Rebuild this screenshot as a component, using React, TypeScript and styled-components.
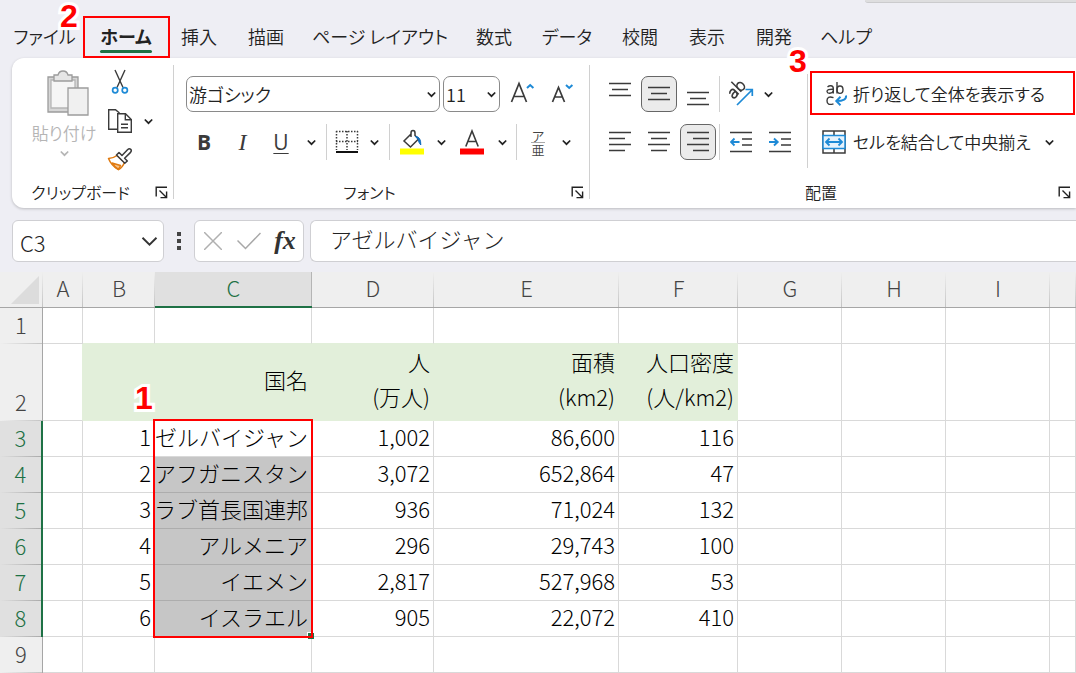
import React from "react";
import styled, { createGlobalStyle, css } from "styled-components";

const GREEN = "#1e7145";
const RED = "#ff0000";
const INK = "#3b3b3b";
const BLUE = "#1e8ad6";
const LINE = "#d9d9d9";

const GlobalStyle = createGlobalStyle`
  *, *::before, *::after { box-sizing: border-box; }
  body {
    margin: 0;
    background: #eeeef4;
    color: #222;
    font-family: "Noto Sans CJK JP", sans-serif;
    font-weight: 350;
    font-size: 18px;
    overflow-x: hidden;
  }
  button, input, select { font: inherit; color: inherit; }
  button { border: 0; background: none; padding: 0; cursor: pointer; }
  svg { display: block; }
`;

/* ---------- shared pieces ---------- */

const StepNumber = styled.span<{ $top: number; $left: number }>`
  position: absolute;
  z-index: 3;
  top: ${(p) => p.$top}px;
  left: ${(p) => p.$left}px;
  color: ${RED};
  font: bold 32px/32px "Liberation Sans", sans-serif;
  -webkit-text-stroke: 6px #fff;
  paint-order: stroke fill;
  pointer-events: none;
`;

const Highlight = styled.span<{ $inset: string }>`
  position: absolute;
  z-index: 2;
  inset: ${(p) => p.$inset};
  border: 2px solid ${RED};
  pointer-events: none;
`;

const Chevron = ({ color = "#222", size = 9 }: { color?: string; size?: number }) => (
  <svg width={size} height={size} viewBox="0 0 9 9" fill="none" stroke={color} strokeWidth={size > 10 ? 1 : 1.7}>
    <path d="M0.8 2.5 4.5 6.2 8.2 2.5" />
  </svg>
);

/* ---------- tabs ---------- */

const Header = styled.header`
  height: 58px;
  display: flex;
  flex-direction: column;
  justify-content: space-between;
`;

const SearchEdge = styled.div`
  align-self: flex-end;
  width: 211px;
  height: 3px;
  background: #dededf;
  border-bottom: 1px solid #cbcbcd;
  border-bottom-left-radius: 3px;
`;

const TabBar = styled.nav`
  display: grid;
  grid-template-columns: 57px 52px 40px 40px 134px 40px 52px 40px 40px 40px 50px;
  column-gap: 27px;
  height: 42px;
  padding-left: 16px;
  align-items: center;
`;

const Tab = styled.button<{ $active?: boolean }>`
  position: relative;
  height: 42px;
  padding-bottom: 3px;
  display: flex;
  justify-content: center;
  align-items: center;
  white-space: nowrap;
  font-size: 18px;
  font-feature-settings: "palt";
  ${(p) =>
    p.$active &&
    css`
      font-weight: 700;
      &::before {
        content: "";
        position: absolute;
        bottom: 5px;
        left: 0;
        right: 0;
        height: 3px;
        border-radius: 2px;
        background: ${GREEN};
      }
    `}
`;

/* ---------- ribbon ---------- */

const Ribbon = styled.section`
  display: flex;
  height: 150px;
  margin-left: 12px;
  background: #fff;
  border-radius: 12px 0 0 12px;
  box-shadow: 0 1px 3px rgba(0, 0, 0, 0.22);
`;

const Group = styled.div<{ $width?: number }>`
  position: relative;
  display: flex;
  flex-direction: column;
  justify-content: space-between;
  ${(p) => (p.$width ? `flex: 0 0 ${p.$width}px;` : "flex: 1 1 0; min-width: 486px;")}
`;

const GroupDivider = styled.div`
  flex: 0 0 1px;
  margin: 7px 0 9px;
  background: #d0d0d0;
`;

const GroupFooter = styled.div`
  height: 31px;
  display: flex;
  align-items: center;
  font-size: 16px;
  font-feature-settings: "palt";
`;

const GroupName = styled.span`
  flex: 1;
  padding-bottom: 2px;
  text-align: center;
`;

const Launcher = styled.button`
  width: 24px;
  height: 24px;
  display: grid;
  place-items: center;
`;

const Footer = ({ name }: { name: string }) => (
  <GroupFooter>
    <GroupName>{name}</GroupName>
    <Launcher aria-label={name + "の設定"}>
      <svg width="13" height="13" viewBox="0 0 13 13" fill="none" stroke="#222" strokeWidth="1.4">
        <path d="M1.2 10.5V1.2H12" />
        <path d="M4.5 4.5 11 11M11.6 5.5V11.6H5.5" />
      </svg>
    </Launcher>
  </GroupFooter>
);

const ClipboardBody = styled.div`
  display: grid;
  grid-template-columns: 80px 32px 24px;
  padding: 10px 0 0 12px;
`;

const PasteButton = styled.button`
  display: flex;
  flex-direction: column;
  align-items: center;
  color: #b5b5b5;
  font-size: 17px;
  line-height: 32px;
  font-feature-settings: "palt";
  white-space: nowrap;
  & > svg:first-child { margin: 2px 0 1px 8px; }
`;

const ToolColumn = styled.div`
  display: grid;
  grid-template-rows: 28px 50px 26px;
  align-content: start;
  place-items: center;
`;

const Stack = styled.div`
  padding-top: 18px;
  display: flex;
  flex-direction: column;
  gap: 12px;
`;

const FontStack = styled(Stack)`
  padding-left: 11px;
`;

const ToolRow = styled.div<{ $gap?: number }>`
  height: 36px;
  display: flex;
  align-items: center;
  gap: ${(p) => p.$gap ?? 0}px;
`;

const ToolButton = styled.button<{ $width?: number; $on?: boolean }>`
  width: ${(p) => p.$width ?? 36}px;
  height: 36px;
  display: grid;
  place-items: center;
  border: 1px solid ${(p) => (p.$on ? "#666" : "transparent")};
  border-radius: 7px;
  background: ${(p) => (p.$on ? "#ebebeb" : "transparent")};
`;

const LetterButton = styled(ToolButton)<{ $kind: "bold" | "italic" | "underline" }>`
  color: ${INK};
  font: 400 21px/24px "Open Sans", "Noto Sans", sans-serif;
  ${(p) => p.$kind === "bold" && "font-weight: 700;"}
  ${(p) => p.$kind === "italic" && `font-family: "Liberation Serif", serif; font-style: italic; font-size: 24px;`}
  ${(p) => p.$kind === "underline" && "text-decoration: underline; text-decoration-thickness: 1px; text-underline-offset: 3px;"}
`;

const RowDivider = styled.span<{ $margin?: number }>`
  flex: 0 0 1px;
  height: 36px;
  margin: 0 ${(p) => p.$margin ?? 0}px;
  background: #d0d0d0;
`;

const SelectBox = styled.label<{ $width: number }>`
  position: relative;
  width: ${(p) => p.$width}px;
  height: 36px;
  margin: 0 2px 0 1px;
  display: flex;
  align-items: center;
  svg { position: absolute; right: 4px; pointer-events: none; }
`;

const Select = styled.select`
  appearance: none;
  width: 100%;
  height: 36px;
  padding: 0 16px 0 2px;
  border: 1px solid #8a8a8a;
  border-radius: 7px;
  background: #fff;
  font-size: 18px;
  color: #222;
  font-feature-settings: "palt";
`;

const AlignBody = styled.div`
  display: flex;
`;

const AlignStack = styled(Stack)`
  flex: 0 0 217px;
  padding-left: 12px;
`;

const BlockDivider = styled.span`
  flex: 0 0 1px;
  height: 94px;
  margin-top: 16px;
  background: #d0d0d0;
`;

const TextStack = styled(Stack)`
  flex: 1;
  min-width: 0;
`;

const TextButton = styled.button`
  position: relative;
  height: 36px;
  padding: 0 19px 0 14px;
  display: grid;
  grid-template-columns: 26px minmax(0, 1fr) 12px;
  column-gap: 5px;
  align-items: center;
  text-align: left;
  white-space: nowrap;
  font-size: 17px;
  font-feature-settings: "palt";
`;

const ButtonText = styled.span`
  padding-bottom: 2px;
`;

const Lines = ({ rows }: { rows: [number, number, number][] }) => (
  <svg width="22" height="24" viewBox="0 0 22 24" stroke={INK} strokeWidth="1.5">
    {rows.map(([y, a, b]) => (
      <path key={y} d={`M${a} ${y}H${b}`} />
    ))}
  </svg>
);

const PasteIcon = () => (
  <svg width="42" height="46" viewBox="0 0 42 46" fill="#f0f0f0" stroke="#9c9c9c" strokeWidth="1.3">
    <path d="M1 7H31V42H1Z" fill="#d6d6d6" />
    <path d="M4 10H28V38H4Z" fill="#f5f5f5" stroke="#b5b5b5" />
    <path d="M7 11V5H11Q12 1 16 1T21 5H25V11Z" fill="#e6e6e6" />
    <path d="M21 18H41V45H21Z" />
  </svg>
);

const CutIcon = () => (
  <svg width="18" height="26" viewBox="0 0 18 26" fill="none" strokeWidth="1.4">
    <path d="M4 1 12 18.500M14 1 6 18.500" stroke={INK} />
    <circle cx="4.200" cy="21.300" r="2.600" stroke={BLUE} strokeWidth="1.700" />
    <circle cx="13.800" cy="21.300" r="2.600" stroke={BLUE} strokeWidth="1.700" />
  </svg>
);

const CopyIcon = () => (
  <svg width="26" height="26" viewBox="0 0 26 26" fill="#fff" stroke={INK} strokeWidth="1.4">
    <path d="M10 21.300H1.700V1.700H8.500L12.500 5" />
    <path d="M10.700 5.700H18.500L24.300 11.500V24.300H10.700Z" />
    <path d="M18.300 5.700V11.700H24.300M14 16.300H21M14 19.800H21" fill="none" />
  </svg>
);

const BrushIcon = () => (
  <svg width="26" height="24" viewBox="0 0 26 24" fill="none" strokeWidth="1.500" strokeLinejoin="round">
    <path d="M10 8.500Q6 11.500 1.500 11.500 4.500 19 11.500 22.500 15.500 20.500 17.500 15.500Z" stroke="#e07a10" fill="#fff" />
    <path d="M5 16 13.500 18.500 11.500 22.500Q8 20.500 5 16Z" fill="#f8c48a" stroke="#e07a10" />
    <path d="M9.500 8 12 5.500 15 8.500 20.500 2.800Q22.300 1 23.700 2.400T23.300 5.600L17.600 11.200 20.300 14 17.800 16.300Z" stroke={INK} fill="#fff" />
  </svg>
);

const BorderIcon = () => (
  <svg width="24" height="24" viewBox="0 0 24 24" fill="none" stroke={INK} strokeWidth="1.500">
    <path d="M1 1.500H23M1 11.500H23M1.500 1V20M12 1V20M22.500 1V20" strokeDasharray="1.500 1.500" />
    <path d="M1 22H23" stroke="#111" strokeWidth="2" />
  </svg>
);

const FillIcon = () => (
  <svg width="24" height="26" viewBox="0 0 24 26" fill="none">
    <path d="M11.500 4.500 4 12 10.500 18 18.500 10 15 6.500V4Q15 1.500 13 1.500T11 4V8" stroke={INK} strokeWidth="1.500" />
    <path d="M15.500 7.500Q21 7.500 20.800 16 18.500 13.500 18.200 10.500Z" fill="#0f6cbd" stroke="#0f6cbd" />
    <path d="M0 19.500H24V25.500H0Z" fill="#ffff00" />
  </svg>
);

const FontColorIcon = () => (
  <svg width="24" height="26" viewBox="0 0 24 26" fill="none">
    <path d="M5.800 17.500 12 2 18.200 17.500M8 12.500H16" stroke={INK} strokeWidth="1.600" />
    <path d="M0 19.500H24V25.500H0Z" fill={RED} />
  </svg>
);

const ResizeFontIcon = ({ grow }: { grow?: boolean }) => (
  <svg width="26" height="26" viewBox="0 0 26 26" fill="none" strokeWidth="1.700">
    <path d={grow ? "M2.500 21 10 2.500 17.500 21M5 15.500H15" : "M3.500 21 9.500 6.500 15.500 21M5.500 16H13.500"} stroke={INK} />
    <path d={grow ? "M18 7 21.200 4 24.400 7" : "M17 4 20.200 7 23.400 4"} stroke={BLUE} strokeWidth="2" />
  </svg>
);

const Phonetic = styled.span`
  display: flex;
  flex-direction: column;
  color: #444;
  font-size: 13px;
  line-height: 13px;
  span + span { border-top: 1px solid #aaa; }
`;

const OrientationIcon = () => (
  <svg width="26" height="26" viewBox="0 0 26 26" fill="none" strokeWidth="1.400">
    <g stroke={INK} transform="rotate(-45 9 9) translate(-1 -2) scale(1.150)">
      <path d="M2 7.500Q3 6 4.700 6 7 6 7 8.300V13.300M7 9.300Q1.500 9 1.500 11.300 1.800 13.500 4.300 13.200 6.500 12.800 7 10.700" />
      <path d="M10.300 1V13.300" />
      <ellipse cx="13.200" cy="9.600" rx="2.900" ry="3.600" />
    </g>
    <path d="M9 24 24 9M17.500 8.500H24.300V15" stroke={BLUE} strokeWidth="1.700" />
  </svg>
);

const IndentIcon = ({ right }: { right?: boolean }) => (
  <svg width="22" height="22" viewBox="0 0 22 22" fill="none" strokeWidth="1.500">
    <path d="M0 1.500H22M12 8H22M12 14H22M0 20.500H22" stroke={INK} />
    <path
      d={right ? "M0 11H8.500M5 7.500 8.700 11 5 14.500" : "M1 11H9.500M4.500 7.500 1 11 4.500 14.500"}
      stroke={BLUE}
      strokeWidth="1.900"
    />
  </svg>
);

const WrapIcon = () => (
  <svg width="26" height="28" viewBox="0 0 26 28" fill="none" strokeWidth="1.400">
    <g stroke={INK}>
      <path d="M5.500 7Q7 5.700 8.800 5.800 11.300 6 11.300 8.500V13.500M11.300 9.300Q5 9 5 11.500 5.200 13.500 7.800 13.300 11 13 11.300 10.500" />
      <path d="M15 2V13.500" />
      <ellipse cx="18" cy="9.700" rx="3" ry="3.700" />
      <path d="M11.500 17.700Q5 15.500 5 20.700T11.500 23.800" />
    </g>
    <path d="M24 15.500Q25 21 14.500 21M18.500 16.800 14.300 21 18.500 25.200" stroke={BLUE} strokeWidth="2" />
  </svg>
);

const MergeIcon = () => (
  <svg width="24" height="24" viewBox="0 0 24 24" fill="none" strokeWidth="1.500">
    <path d="M1 1H23V23H1ZM12 1V6M12 18V23" stroke={INK} />
    <path d="M1 5.500H23V18.500H1Z" fill="#e6f2fc" stroke={BLUE} />
    <path d="M4 12H20M7.500 8.500 4 12 7.500 15.500M16.500 8.500 20 12 16.500 15.500" stroke={BLUE} strokeWidth="1.800" />
  </svg>
);

const Drop = ({ label, width = 22 }: { label: string; width?: number }) => (
  <ToolButton $width={width} aria-label={label}>
    <Chevron />
  </ToolButton>
);

/* ---------- formula bar ---------- */

const FormulaBar = styled.div`
  display: flex;
  align-items: center;
  padding: 12px 0 10px 12px;
`;

const NameBox = styled.label`
  position: relative;
  flex: 0 0 152px;
  height: 42px;
  display: flex;
  align-items: center;
  svg { position: absolute; right: 6px; }
`;

const BarInput = styled.input<{ $open?: boolean }>`
  flex: 1;
  width: 100%;
  min-width: 0;
  height: 42px;
  padding: ${(p) => (p.$open ? "0 0 6px 19px" : "2px 0 0 7px")};
  border: 1px solid #cfcfd3;
  border-right-width: ${(p) => (p.$open ? 0 : 1)}px;
  border-radius: ${(p) => (p.$open ? "6px 0 0 6px" : "6px")};
  background: #fff;
  color: #222;
  font-weight: 300;
  font-size: 22px;
`;

const Dots = styled.span`
  flex: 0 0 30px;
  display: grid;
  justify-content: center;
  gap: 3px;
  i { width: 4px; height: 4px; background: #444; }
`;

const FormulaTools = styled.div`
  flex: 0 0 110px;
  height: 42px;
  margin-right: 6px;
  display: grid;
  grid-template-columns: 36px 36px 36px;
  align-items: center;
  justify-items: center;
  border: 1px solid #cfcfd3;
  border-radius: 6px;
  background: #fff;
`;

const FxButton = styled.button`
  color: #333;
  font: italic 700 26px/30px "Liberation Serif", serif;
`;

/* ---------- sheet ---------- */

const Sheet = styled.table`
  width: 100%;
  table-layout: fixed;
  border-collapse: separate;
  border-spacing: 0;
  background: #fff;
  font-size: 22px;
  font-weight: 300;
  line-height: 31px;
`;

const ColumnHead = styled.th<{ $on?: boolean }>`
  height: 36px;
  padding: 0 0 4px;
  font-weight: 300;
  line-height: 29px;
  color: ${(p) => (p.$on ? GREEN : "#444")};
  background: ${(p) =>
    p.$on
      ? "linear-gradient(#b5b5b5, #b5b5b5) right / 1px 100% no-repeat #e0e0e0"
      : "linear-gradient(#efefef, #c4c4c4) right / 1px 100% no-repeat #efefef"};
  border-bottom: ${(p) => (p.$on ? `2px solid ${GREEN}` : "1px solid #a6a6a6")};
`;

const Corner = styled(ColumnHead)`
  padding-bottom: 0;
  svg { margin: 0 0 0 11px; }
`;

const RowHead = styled.th<{ $on?: boolean }>`
  padding: 0 0 4px;
  font-weight: 300;
  vertical-align: bottom;
  color: ${(p) => (p.$on ? GREEN : "#444")};
  background: ${(p) =>
    p.$on
      ? "linear-gradient(to right, #e0e0e0, #ababab) bottom / 100% 1px no-repeat #e0e0e0"
      : "linear-gradient(to right, #efefef, #c4c4c4) bottom / 100% 1px no-repeat #efefef"};
  border-right: ${(p) => (p.$on ? `2px solid ${GREEN}` : "1px solid #a6a6a6")};
`;

const Cell = styled.td<{ $fill?: string; $right?: string; $bottom?: string; $tall?: boolean }>`
  position: relative;
  padding: 0 3px ${(p) => (p.$tall ? 6 : 4)}px 0;
  text-align: right;
  white-space: pre-line;
  color: #000;
  line-height: ${(p) => (p.$tall ? 35 : 31)}px;
  background: ${(p) => p.$fill ?? "#fff"};
  border-right: 1px solid ${(p) => p.$right ?? LINE};
  border-bottom: 1px solid ${(p) => p.$bottom ?? LINE};
`;

const Clip = styled.div`
  display: flex;
  justify-content: flex-end;
  overflow: hidden;
  white-space: nowrap;
`;

const FillHandle = styled.span`
  position: absolute;
  z-index: 1;
  right: -3px;
  bottom: -3px;
  width: 7px;
  height: 7px;
  background: ${GREEN};
  border: solid #fff;
  border-width: 1px 0 0 1px;
`;

const TABS = ["ファイル", "ホーム", "挿入", "描画", "ページ レイアウト", "数式", "データ", "校閲", "表示", "開発", "ヘルプ"];
const COLUMNS = ["A", "B", "C", "D", "E", "F", "G", "H", "I", ""];
const WIDTHS = [40, 72, 157, 122, 185, 119, 104, 104, 104];
const ROWS: string[][] = [
  [],
  ["", "", "国名", "人\n(万人)", "面積\n(km2)", "人口密度\n(人/km2)"],
  ["", "1", "アゼルバイジャン", "1,002", "86,600", "116"],
  ["", "2", "アフガニスタン", "3,072", "652,864", "47"],
  ["", "3", "アラブ首長国連邦", "936", "71,024", "132"],
  ["", "4", "アルメニア", "296", "29,743", "100"],
  ["", "5", "イエメン", "2,817", "527,968", "53"],
  ["", "6", "イスラエル", "905", "22,072", "410"],
  [],
];
const HEAD_FILL = "#e2efda";

const Col = styled.col<{ $width?: number }>`
  ${(p) => p.$width && `width: ${p.$width}px;`}
`;

const BodyRow = styled.tr<{ $tall?: boolean }>`
  height: ${(p) => (p.$tall ? 77 : 36)}px;
`;

function SheetCell({ r, c, text }: { r: number; c: number; text: string }) {
  const inHead = r === 1 && c >= 1 && c <= 5;
  const picked = c === 2 && r >= 3 && r <= 7;
  const aboveHead = r === 0 && c >= 1 && c <= 5;
  return (
    <Cell
      $tall={r === 1}
      $fill={inHead ? HEAD_FILL : picked ? "#c6c6c6" : undefined}
      $right={inHead || (r === 1 && c === 0) ? HEAD_FILL : undefined}
      $bottom={inHead || aboveHead ? HEAD_FILL : picked ? "#adadad" : undefined}
    >
      {c === 2 && r >= 2 && text ? <Clip>{text}</Clip> : text}
      {r === 1 && c === 1 && <StepNumber $top={38} $left={52}>1</StepNumber>}
      {r === 2 && c === 2 && <Highlight $inset="-2px -2px -182px -2px" />}
      {r === 7 && c === 2 && <FillHandle />}
    </Cell>
  );
}

export default function App() {
  return (
    <>
      <GlobalStyle />
      <Header>
        <SearchEdge />
        <TabBar>
          {TABS.map((t, i) => (
            <Tab key={t} $active={i === 1}>
              {t}
              {i === 1 && (
                <>
                  <Highlight $inset="0 -18px 0 -17px" />
                  <StepNumber $top={-16} $left={-40}>2</StepNumber>
                </>
              )}
            </Tab>
          ))}
        </TabBar>
      </Header>

      <Ribbon>
        <Group $width={161}>
          <ClipboardBody>
            <PasteButton>
              <PasteIcon />
              貼り付け
              <Chevron color="#b5b5b5" />
            </PasteButton>
            <ToolColumn>
              <button aria-label="切り取り"><CutIcon /></button>
              <button aria-label="コピー"><CopyIcon /></button>
              <button aria-label="書式のコピー"><BrushIcon /></button>
            </ToolColumn>
            <ToolColumn>
              <span />
              <button aria-label="コピーのオプション"><Chevron /></button>
            </ToolColumn>
          </ClipboardBody>
          <Footer name="クリップボード" />
        </Group>
        <GroupDivider />

        <Group $width={415}>
          <FontStack>
            <ToolRow>
              <SelectBox $width={254}>
                <Select aria-label="フォント名"><option>游ゴシック</option></Select>
                <Chevron />
              </SelectBox>
              <SelectBox $width={57}>
                <Select aria-label="サイズ"><option>11</option></Select>
                <Chevron />
              </SelectBox>
              <ToolButton $width={40} aria-label="拡大"><ResizeFontIcon grow /></ToolButton>
              <ToolButton $width={40} aria-label="縮小"><ResizeFontIcon /></ToolButton>
            </ToolRow>
            <ToolRow>
              <LetterButton $kind="bold" $width={38}>B</LetterButton>
              <LetterButton $kind="italic" $width={39}>I</LetterButton>
              <LetterButton $kind="underline" $width={38}>U</LetterButton>
              <Drop label="下線" />
              <RowDivider $margin={4} />
              <ToolButton $width={32} aria-label="罫線"><BorderIcon /></ToolButton>
              <Drop label="罫線の種類" />
              <RowDivider $margin={4} />
              <ToolButton aria-label="塗りつぶし"><FillIcon /></ToolButton>
              <Drop label="塗りつぶしの色" />
              <ToolButton $width={40} aria-label="文字色"><FontColorIcon /></ToolButton>
              <Drop label="文字の色" width={20} />
              <RowDivider $margin={4} />
              <ToolButton $width={34}>
                <Phonetic><span>ア</span><span>亜</span></Phonetic>
              </ToolButton>
              <Drop label="ふりがな" />
            </ToolRow>
          </FontStack>
          <Footer name="フォント" />
        </Group>
        <GroupDivider />

        <Group>
          <StepNumber $top={-13} $left={199}>3</StepNumber>
          <AlignBody>
            <AlignStack>
              <ToolRow $gap={3}>
                <ToolButton aria-label="上揃え"><Lines rows={[[1.5, 0, 22], [7.5, 3, 19], [13.5, 0, 22]]} /></ToolButton>
                <ToolButton $on aria-label="上下中央揃え"><Lines rows={[[5.5, 0, 22], [11.5, 3, 19], [17.5, 0, 22]]} /></ToolButton>
                <ToolButton aria-label="下揃え"><Lines rows={[[10.5, 0, 22], [16.5, 3, 19], [22.5, 0, 22]]} /></ToolButton>
                <RowDivider />
                <ToolButton aria-label="方向"><OrientationIcon /></ToolButton>
                <Drop label="方向の種類" width={12} />
              </ToolRow>
              <ToolRow $gap={3}>
                <ToolButton aria-label="左揃え"><Lines rows={[[2.5, 0, 22], [8.5, 0, 16], [14.5, 0, 22], [20.5, 0, 16]]} /></ToolButton>
                <ToolButton aria-label="中央揃え"><Lines rows={[[2.5, 0, 22], [8.5, 3, 19], [14.5, 0, 22], [20.5, 3, 19]]} /></ToolButton>
                <ToolButton $on aria-label="右揃え"><Lines rows={[[2.5, 0, 22], [8.5, 6, 22], [14.5, 0, 22], [20.5, 6, 22]]} /></ToolButton>
                <RowDivider />
                <ToolButton aria-label="インデントを減らす"><IndentIcon /></ToolButton>
                <ToolButton aria-label="インデントを増やす"><IndentIcon right /></ToolButton>
              </ToolRow>
            </AlignStack>
            <BlockDivider />
            <TextStack>
              <TextButton>
                <WrapIcon />
                <ButtonText>折り返して全体を表示する</ButtonText>
                <Highlight $inset="-5px 1px -3px 2px" />
              </TextButton>
              <TextButton>
                <MergeIcon />
                <ButtonText>セルを結合して中央揃え</ButtonText>
                <Chevron />
              </TextButton>
            </TextStack>
          </AlignBody>
          <Footer name="配置" />
        </Group>
      </Ribbon>

      <FormulaBar>
        <NameBox>
          <BarInput aria-label="名前ボックス" defaultValue="C3" />
          <Chevron size={17} color="#333" />
        </NameBox>
        <Dots><i /><i /><i /></Dots>
        <FormulaTools>
          <button aria-label="キャンセル">
            <svg width="18" height="18" viewBox="0 0 18 18" stroke="#b0b0b0" strokeWidth="1.500"><path d="M0 0 18 18M18 0 0 18" /></svg>
          </button>
          <button aria-label="入力">
            <svg width="24" height="18" viewBox="0 0 24 18" fill="none" stroke="#a8a8a8" strokeWidth="1.500"><path d="M0.500 8.500 8.500 16.500 23.500 1" /></svg>
          </button>
          <FxButton>fx</FxButton>
        </FormulaTools>
        <BarInput $open aria-label="数式バー" defaultValue="アゼルバイジャン" />
      </FormulaBar>

      <Sheet>
        <colgroup>
          <Col $width={43} />
          {WIDTHS.map((w, i) => <Col key={i} $width={w} />)}
          <Col />
        </colgroup>
        <thead>
          <tr>
            <Corner aria-label="すべて選択">
              <svg width="28" height="28" viewBox="0 0 28 28"><path d="M28 0V28H0Z" fill="#dcdcdc" /></svg>
            </Corner>
            {COLUMNS.map((c) => <ColumnHead key={c} $on={c === "C"}>{c}</ColumnHead>)}
          </tr>
        </thead>
        <tbody>
          {ROWS.map((row, r) => (
            <BodyRow key={r} $tall={r === 1}>
              <RowHead $on={r >= 2 && r <= 7}>{r + 1}</RowHead>
              {COLUMNS.map((_, c) => <SheetCell key={c} r={r} c={c} text={row[c] ?? ""} />)}
            </BodyRow>
          ))}
        </tbody>
      </Sheet>
    </>
  );
}
